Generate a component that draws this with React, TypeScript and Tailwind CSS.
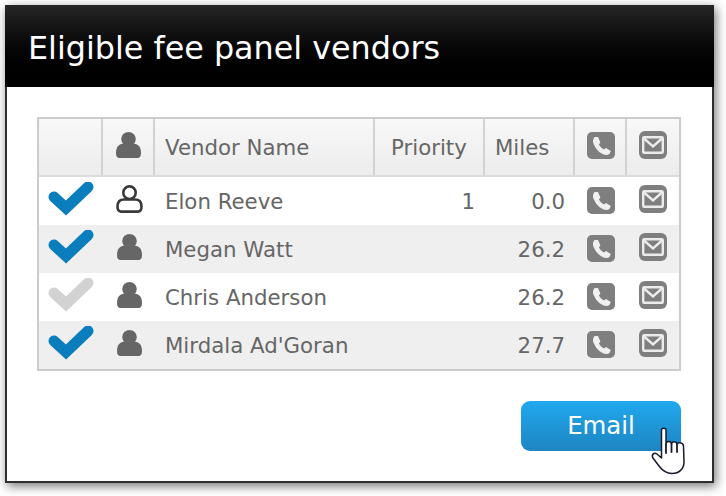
const F = { fontFamily: '"DejaVu Sans", Verdana, sans-serif' };

function Check({ color }: { color: string }) {
  return (
    <svg width="46" height="38" viewBox="0 -2 46 38" className="block blur-[0.4px]">
      <path d="M6 13 L18 24 L40 3" fill="none" stroke={color} strokeWidth="11" strokeLinecap="round" strokeLinejoin="miter" />
    </svg>
  );
}

function Person({ outline }: { outline?: boolean }) {
  if (outline) {
    return (
      <svg width="27" height="28" viewBox="0 0 27 28" className="block blur-[0.3px]">
        <path d="M1.5 21.5 C1.5 17 4 14.5 8 14.5 H19 C23 14.5 25.5 17 25.5 21.5 C25.5 25 24.5 26.6 22 26.6 H5 C2.5 26.6 1.5 25 1.5 21.5 Z" fill="#fff" stroke="#3a3a3a" strokeWidth="2.6" strokeLinejoin="round" />
        <ellipse cx="13.5" cy="7.7" rx="6.2" ry="6.3" fill="#fff" stroke="#3a3a3a" strokeWidth="2.6" />
      </svg>
    );
  }
  return (
    <svg width="25" height="26" viewBox="0 0 25 26" className="block blur-[0.4px]">
      <ellipse cx="12.5" cy="7" rx="7.3" ry="7" fill="#666" />
      <path d="M0 21 C0 15 3 11.5 8 11.5 H17 C22 11.5 25 15 25 21 C25 24 24 26 21 26 H4 C1 26 0 24 0 21 Z" fill="#666" />
    </svg>
  );
}

function Phone() {
  return (
    <svg width="28" height="27" viewBox="0 0 28 27" className="block blur-[0.4px]">
      <rect x="0" y="0" width="28" height="27" rx="5" fill="#7f7f7f" />
      <path d="M7.6 5 L11 5 L13.4 10.5 L11.9 12.5 C13.2 14.8 14.8 16.4 17 17.6 L19 16 L23.8 19 L22.4 22 C20 23.6 17 23 13.8 21 C9.8 18.4 6.6 13 6 10 C5.8 8 6.6 6 7.6 5 Z" fill="#f0f0f0" />
    </svg>
  );
}

function Mail() {
  return (
    <svg width="28" height="28" viewBox="0 0 28 28" className="block blur-[0.4px]">
      <rect x="0" y="0" width="28" height="28" rx="6" fill="#7f7f7f" />
      <rect x="4.2" y="6.2" width="19.6" height="15.6" rx="1" fill="none" stroke="#ececec" strokeWidth="2.4" />
      <path d="M5 7.5 L14 15.5 L23 7.5" fill="none" stroke="#ececec" strokeWidth="2.4" />
    </svg>
  );
}

function Cursor() {
  return (
    <svg width="38" height="50" viewBox="0 0 38 50" className="block">
      <path
        d="M11.5 4 C11.5 1.5 16 1.5 16 4 V18 C16 14.5 21.5 14.5 21.5 18 C21.5 15 27 15 27 18.5 C27 16 33 16 33.5 20 L34 36 C34 43 29 47.5 22 47.5 C16 47.5 12 44 9 40 L3 32 C1 29 4 26 7 28 L11.5 32 Z"
        fill="#fff"
        stroke="#1a1a2e"
        strokeWidth="1.5"
        strokeLinejoin="round"
      />
      <path d="M16 18 V27 M21.5 18 V26 M27 18.5 V26" fill="none" stroke="#1a1a2e" strokeWidth="1.8" strokeLinecap="round" />
    </svg>
  );
}

const rows = [
  { check: '#0a7dbd', outline: true, name: 'Elon Reeve', priority: '1', miles: '0.0' },
  { check: '#0a7dbd', name: 'Megan Watt', priority: '', miles: '26.2', alt: true },
  { check: '#d2d2d2', name: 'Chris Anderson', priority: '', miles: '26.2' },
  { check: '#0a7dbd', name: "Mirdala Ad'Goran", priority: '', miles: '27.7', alt: true },
];

const cols = 'grid grid-cols-[64px_52px_220px_110px_90px_52px_1fr]';

export default function App() {
  return (
    <div className="w-[726px] h-[496px] bg-white pl-[5px] pt-[5px]" style={F}>
      <div className="w-[709px] h-[478px] bg-white border-2 border-[#2e2e2e] border-t-0 shadow-[2px_3px_10px_rgba(0,0,0,0.55)]">
        <div className="h-[82px] -ml-[2px] -mr-[2px] bg-gradient-to-b from-[#262626] to-black flex items-center pl-[23px] pt-[3px]">
          <h1 className="text-[31.8px] leading-none text-white">Eligible fee panel vendors</h1>
        </div>
        <div className="ml-[30px] mt-[30px] w-[644px] h-[254px] border-2 border-[#cccccc] text-[#666666] text-[21.3px]">
          <div className={`${cols} h-[58px] bg-gradient-to-b from-[#f8f8f8] to-[#ececec] border-b-2 border-[#dcdcdc]`}>
            <div className="border-r-2 border-[#d2d2d2]" />
            <div className="border-r-2 border-[#d2d2d2] flex items-center justify-center pb-[4px]"><Person /></div>
            <div className="border-r-2 border-[#d2d2d2] flex items-center pl-[10px] pt-[1px]">Vendor Name</div>
            <div className="border-r-2 border-[#d2d2d2] flex items-center pl-[16px] pt-[1px]">Priority</div>
            <div className="border-r-2 border-[#d2d2d2] flex items-center pl-[10px] pt-[1px]">Miles</div>
            <div className="border-r-2 border-[#d2d2d2] flex items-center justify-center pl-[2px] pb-[3px]"><Phone /></div>
            <div className="flex items-center justify-center pb-[4px]"><Mail /></div>
          </div>
          {rows.map((r) => (
            <div key={r.name} className={`${cols} h-[48px] ${r.alt ? 'bg-[#efefef]' : 'bg-white'}`}>
              <div className="flex items-center pl-[9px]"><Check color={r.check} /></div>
              <div className="flex items-center justify-center pb-[4px]"><Person outline={r.outline} /></div>
              <div className="flex items-center pl-[10px] pt-[1px]">{r.name}</div>
              <div className="flex items-center justify-end pr-[10px] pt-[1px]">{r.priority}</div>
              <div className="flex items-center justify-end pr-[10px] pt-[1px]">{r.miles}</div>
              <div className="flex items-center justify-center pb-[2px]"><Phone /></div>
              <div className="flex items-center justify-center pb-[4px]"><Mail /></div>
            </div>
          ))}
        </div>
        <div className="flex justify-end pr-[31px] pt-[30px]">
          <div className="relative">
            <button className="w-[160px] h-[50px] rounded-[9px] bg-gradient-to-b from-[#20a8ee] to-[#1d86c2] text-white text-[24.4px] leading-none">Email</button>
            <div className="absolute left-[129px] top-[25px]"><Cursor /></div>
          </div>
        </div>
      </div>
    </div>
  );
}
